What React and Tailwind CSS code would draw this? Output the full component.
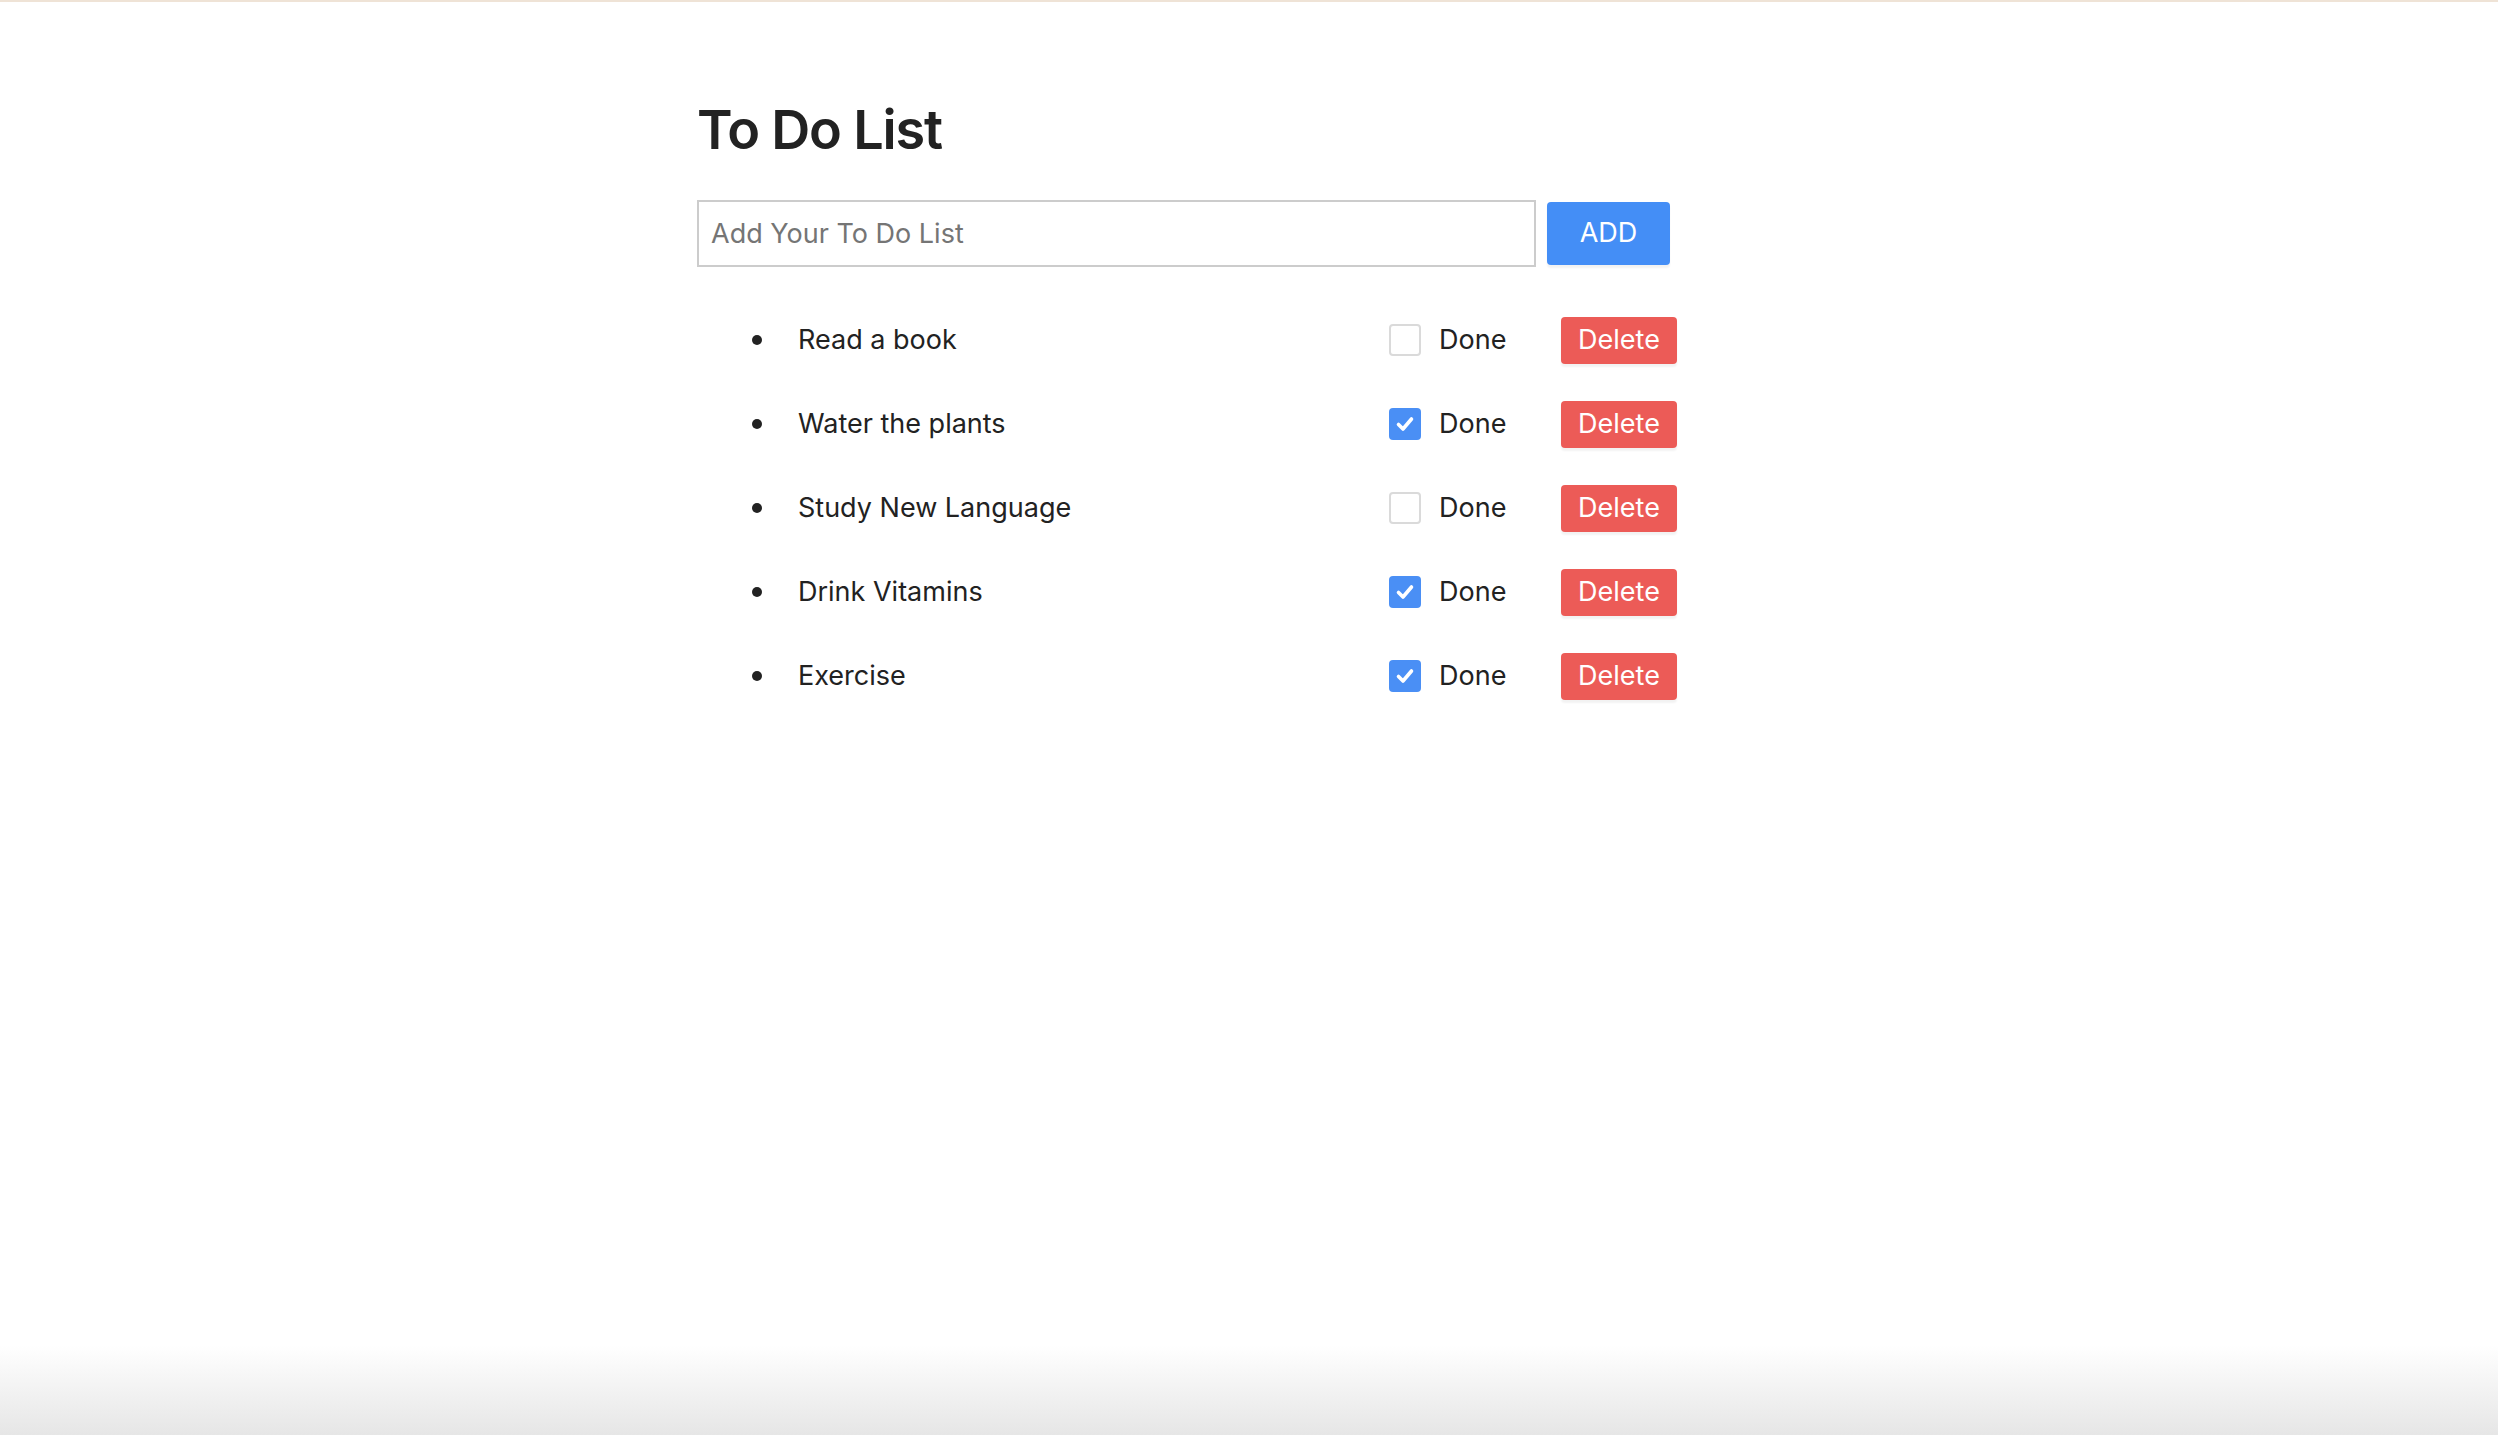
import { useState } from "react";

const initialTodos = [
  { id: 1, text: "Read a book", done: false },
  { id: 2, text: "Water the plants", done: true },
  { id: 3, text: "Study New Language", done: false },
  { id: 4, text: "Drink Vitamins", done: true },
  { id: 5, text: "Exercise", done: true },
];

function CheckBox({ checked, onChange }) {
  return (
    <button
      type="button"
      onClick={onChange}
      className={`flex h-[32px] w-[32px] shrink-0 items-center justify-center rounded-[4px] ${
        checked
          ? "bg-[#4a8ff5]"
          : "border-2 border-[#dadada] bg-white"
      }`}
    >
      {checked && (
        <svg width="22" height="22" viewBox="0 0 22 22" fill="none">
          <path
            d="M4.5 11.5l4.5 4.5 8.5-10"
            stroke="white"
            strokeWidth="3.6"
            strokeLinecap="round"
            strokeLinejoin="round"
          />
        </svg>
      )}
    </button>
  );
}

function TodoRow({ todo, onToggle, onDelete }) {
  return (
    <li className="flex h-[84px] items-center">
      <span className="ml-[55px] h-[10px] w-[10px] shrink-0 rounded-full bg-[#222]" />
      <span className="ml-[36px] w-[591px] shrink-0 text-[27px] text-[#222]">
        {todo.text}
      </span>
      <CheckBox checked={todo.done} onChange={onToggle} />
      <span className="ml-[18px] w-[122px] shrink-0 text-[27px] text-[#222]">
        Done
      </span>
      <button
        type="button"
        onClick={onDelete}
        className="h-[47px] w-[116px] rounded-[4px] bg-[#ec5b57] text-[27px] text-white shadow-[0_3px_2px_rgba(0,0,0,0.05)]"
      >
        Delete
      </button>
    </li>
  );
}

export default function App() {
  const [todos, setTodos] = useState(initialTodos);
  const [input, setInput] = useState("");

  const addTodo = () => {
    if (!input.trim()) return;
    setTodos([...todos, { id: Date.now(), text: input.trim(), done: false }]);
    setInput("");
  };

  return (
    <div className="flex h-screen flex-col bg-white font-['Inter',sans-serif]">
      <div className="h-[2px] bg-[#efe3d6]" />
      <main className="flex-1">
        <div className="ml-[697px] w-[1000px] pt-[101px]">
          <h1 className="text-[54px] font-semibold leading-[1] tracking-[-1.2px] text-[#222]">
            To Do List
          </h1>
          <div className="mt-[43px] flex items-center">
            <input
              value={input}
              onChange={(e) => setInput(e.target.value)}
              placeholder="Add Your To Do List"
              className="h-[67px] w-[839px] border-2 border-[#cccccc] px-[12px] text-[27px] text-[#222] outline-none placeholder:text-[#757575]"
            />
            <button
              type="button"
              onClick={addTodo}
              className="ml-[11px] h-[63px] w-[123px] rounded-[4px] bg-[#448ef6] text-[27px] text-white shadow-[0_3px_2px_rgba(0,0,0,0.05)]"
            >
              ADD
            </button>
          </div>
          <ul className="mt-[31px]">
            {todos.map((todo) => (
              <TodoRow
                key={todo.id}
                todo={todo}
                onToggle={() =>
                  setTodos(
                    todos.map((t) =>
                      t.id === todo.id ? { ...t, done: !t.done } : t
                    )
                  )
                }
                onDelete={() => setTodos(todos.filter((t) => t.id !== todo.id))}
              />
            ))}
          </ul>
        </div>
      </main>
      <div className="h-[90px] bg-gradient-to-b from-white to-[#e6e6e6]" />
    </div>
  );
}
